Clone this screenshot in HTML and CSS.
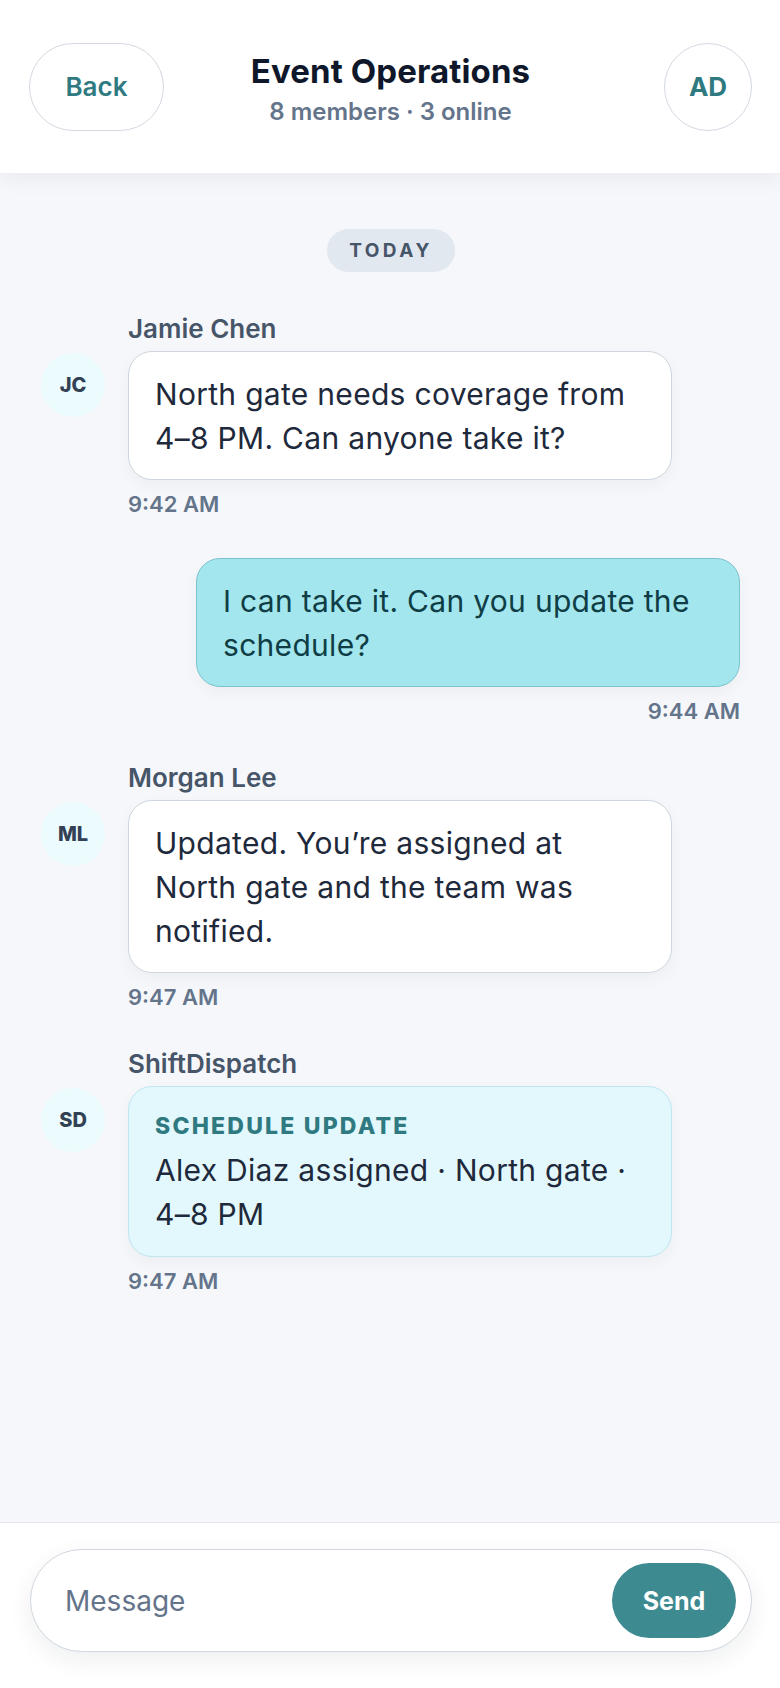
FILE: index.html
```html
<!DOCTYPE html>
<html lang="en">
    <head>
        <meta charset="UTF-8" />
        <meta name="viewport" content="width=device-width, initial-scale=1.0" />
        <title>Event Operations</title>

        <link rel="stylesheet" href="styles.css">
    </head>
    <body>
        <header class="chat_header">
            <button class="back_btn">Back</button>
            <div class="chat_title">
                <h1>Event Operations</h1>
                <p>8 members · 3 online</p>
            </div>
            <div class="me_badge">AD</div>
        </header>

        <main class="chat_body">
            <div class="day_pill">TODAY</div>

            <div class="msg">
                <div class="msg_name">Jamie Chen</div>
                <div class="avatar">JC</div>
                <div class="bubble">North gate needs coverage from 4–8 PM. Can anyone take it?</div>
                <div class="msg_time">9:42 AM</div>
            </div>

            <div class="msg_out">
                <div class="bubble bubble_out">I can take it. Can you update the schedule?</div>
                <div class="msg_time">9:44 AM</div>
            </div>

            <div class="msg">
                <div class="msg_name">Morgan Lee</div>
                <div class="avatar">ML</div>
                <div class="bubble">Updated. You’re assigned at North gate and the team was notified.</div>
                <div class="msg_time">9:47 AM</div>
            </div>

            <div class="msg">
                <div class="msg_name">ShiftDispatch</div>
                <div class="avatar">SD</div>
                <div class="bubble bubble_system">
                    <div class="system_label">SCHEDULE UPDATE</div>
                    Alex Diaz assigned · North gate · 4–8 PM
                </div>
                <div class="msg_time">9:47 AM</div>
            </div>
        </main>

        <footer class="composer">
            <form class="composer_box">
                <input type="text" placeholder="Message" />
                <button class="send_btn">Send</button>
            </form>
        </footer>
    </body>
</html>
```

FILE: styles.css
```css
* {
    box-sizing: border-box;
}

body {
    margin: 0;
    height: 100vh;
    display: flex;
    flex-direction: column;
    font-family: "Inter", "Noto Sans", sans-serif;
    background-color: #f5f7fa;
    color: #1e293b;
}

.chat_header {
    height: 174px;
    flex-shrink: 0;
    display: grid;
    grid-template-columns: 1fr auto 1fr;
    align-items: center;
    padding: 0 28px 0 29px;
    background-color: #ffffff;
    box-shadow: 0 6px 20px rgba(15, 23, 42, 0.05);
    border-bottom: 1px solid #eef1f5;
    position: relative;
    z-index: 1;
}

.back_btn {
    width: 135px;
    height: 88px;
    border: 1.5px solid #d3d9e1;
    border-radius: 999px;
    background: #ffffff;
    color: #2f7a80;
    font-family: inherit;
    font-size: 26px;
    font-weight: 600;
}

.chat_title {
    text-align: center;
    margin-top: 4px;
}

.chat_title h1 {
    margin: 0;
    font-size: 33px;
    line-height: 40px;
    font-weight: 700;
    color: #0f172a;
    letter-spacing: 0.1px;
}

.chat_title p {
    margin: 6px 0 0;
    font-size: 24px;
    line-height: 30px;
    font-weight: 600;
    color: #64748b;
}

.me_badge {
    justify-self: end;
    width: 88px;
    height: 88px;
    border: 1.5px solid #d3d9e1;
    border-radius: 50%;
    display: flex;
    align-items: center;
    justify-content: center;
    color: #2f7a80;
    font-size: 26px;
    font-weight: 700;
}

.chat_body {
    flex: 1;
    display: flex;
    flex-direction: column;
    gap: 42px;
    padding: 55px 40px 0 42px;
}

.day_pill {
    align-self: center;
    width: 128px;
    height: 43px;
    border-radius: 999px;
    background-color: #e2e8f0;
    color: #475569;
    font-size: 19px;
    font-weight: 700;
    letter-spacing: 3.5px;
    display: flex;
    align-items: center;
    justify-content: center;
    margin-bottom: 2px;
}

.msg {
    display: grid;
    grid-template-columns: 62px 544px;
    column-gap: 24px;
}

.msg_name {
    grid-column: 2;
    font-size: 26px;
    line-height: 26px;
    font-weight: 600;
    color: #475569;
    margin-bottom: 9px;
}

.avatar {
    grid-column: 1;
    width: 64px;
    height: 64px;
    margin: 2px 0 0 -1px;
    border-radius: 50%;
    background-color: #ecfbfe;
    display: flex;
    align-items: center;
    justify-content: center;
    color: #334155;
    font-size: 20px;
    font-weight: 800;
}

.bubble {
    grid-column: 2;
    padding: 20px 26px 19px;
    border: 1.5px solid #cfd6df;
    border-radius: 24px;
    background-color: #ffffff;
    font-size: 30px;
    line-height: 44px;
    letter-spacing: 0.3px;
    color: #1e293b;
    box-shadow: 0 6px 16px rgba(15, 23, 42, 0.04);
}

.msg .msg_time {
    grid-column: 2;
}

.msg_time {
    margin-top: 12px;
    font-size: 22px;
    line-height: 24px;
    font-weight: 600;
    color: #64748b;
}

.msg_out {
    display: flex;
    flex-direction: column;
    align-items: flex-end;
}

.bubble_out {
    width: 544px;
    background-color: #a3e6ee;
    border-color: #7cc4cc;
    color: #0f3d45;
}

.bubble_system {
    background-color: #e3f8fc;
    border-color: #bfe7f0;
    padding-top: 26px;
    padding-bottom: 20px;
}

.system_label {
    font-size: 23px;
    line-height: 26px;
    font-weight: 800;
    letter-spacing: 2.2px;
    color: #2f7a80;
    margin-bottom: 9px;
}

.composer {
    flex-shrink: 0;
    background-color: #ffffff;
    border-top: 1px solid #e5e9ef;
    padding: 26px 28px 36px 30px;
}

.composer_box {
    height: 103px;
    display: flex;
    align-items: center;
    padding: 0 15px 0 32px;
    border: 1.5px solid #cfd6df;
    border-radius: 999px;
    background-color: #ffffff;
    box-shadow: 0 8px 24px rgba(15, 23, 42, 0.07);
}

.composer_box input {
    flex: 1;
    border: none;
    outline: none;
    background: transparent;
    font-family: inherit;
    font-size: 28px;
    color: #1e293b;
}

.composer_box input::placeholder {
    color: #64748b;
}

.send_btn {
    width: 124px;
    height: 75px;
    border: none;
    border-radius: 999px;
    background-color: #3e8a91;
    color: #ffffff;
    font-family: inherit;
    font-size: 25px;
    font-weight: 700;
}
```
